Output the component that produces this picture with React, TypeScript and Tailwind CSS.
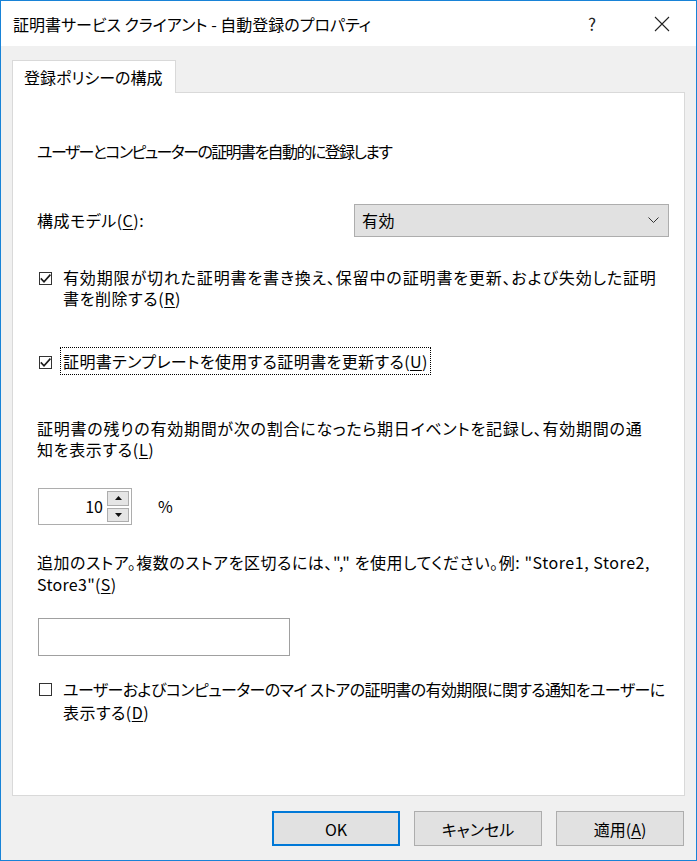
import React from 'react';

const font = "font-['Noto_Sans_CJK_JP','Noto_Sans',sans-serif] [font-feature-settings:'palt']";

const Key: React.FC<{ k: string }> = ({ k }) => (
  <>
    (<span className="underline underline-offset-2">{k}</span>)
  </>
);

const CheckBox: React.FC<{ checked?: boolean }> = ({ checked }) => (
  <div className="w-[13px] h-[13px] border border-[#333] bg-white shrink-0 mt-[5px] ml-[2px] flex items-center justify-center">
    {checked && (
      <svg width="11" height="11" viewBox="0 0 11 11">
        <path d="M0.8 5.4 L4 8.8 L10.4 1.6" fill="none" stroke="#1a1a1a" strokeWidth="1.6" />
      </svg>
    )}
  </div>
);

const Button: React.FC<{ children: React.ReactNode; primary?: boolean }> = ({ children, primary }) => (
  <div
    className={`w-[128px] h-[35px] flex items-center justify-center bg-[#e1e1e1] text-[16px] ${
      primary ? 'border-2 border-[#0078d7]' : 'border border-[#adadad]'
    }`}
  >
    {children}
  </div>
);

export default function App() {
  return (
    <div className={`w-[697px] h-[861px] border border-[#1883d7] bg-[#f0f0f0] flex flex-col text-black ${font}`}>
      {/* title bar */}
      <div className="h-[45px] bg-white flex items-center pl-[12px] pr-[11px] shrink-0">
        <span className="text-[16px]">証明書サービス クライアント - 自動登録のプロパティ</span>
        <div className="ml-auto w-[46px] flex justify-center text-[17px] text-[#222]">?</div>
        <div className="ml-[24px] w-[46px] flex justify-center">
          <svg width="16" height="16" viewBox="0 0 16 16">
            <path d="M1 1 L15 15 M15 1 L1 15" stroke="#222" strokeWidth="1.1" fill="none" />
          </svg>
        </div>
      </div>

      <div className="flex-1 px-[11px] pt-[14px] flex flex-col">
        {/* tab */}
        <div className="w-[164px] h-[33px] bg-white border border-b-0 border-[#d9d9d9] relative z-10 -mb-px pl-[11px] flex items-center text-[16px]">
          登録ポリシーの構成
        </div>

        {/* panel */}
        <div className="h-[704px] bg-white border border-[#d9d9d9] pl-[24px] pr-[10px] pt-[48px] text-[16px] leading-[21px] whitespace-nowrap">
          <div className="tracking-[-1.6px]">ユーザーとコンピューターの証明書を自動的に登録します</div>

          <div className="flex items-center mt-[42px]">
            <div className="w-[317px] tracking-[0.5px]">
              構成モデル<Key k="C" />:
            </div>
            <div className="w-[315px] h-[33px] bg-[#e1e1e1] border border-[#adadad] flex items-center pl-[7px] pr-[9px]">
              <span className="tracking-[0.5px]">有効</span>
              <svg className="ml-auto" width="11" height="7" viewBox="0 0 11 7">
                <path d="M0.5 0.5 L5.5 5.5 L10.5 0.5" fill="none" stroke="#333" strokeWidth="1" />
              </svg>
            </div>
          </div>

          <div className="flex mt-[30px]">
            <CheckBox checked />
            <div className="ml-[11px]">
              <div className="tracking-[0.86px]">有効期限が切れた証明書を書き換え、保留中の証明書を更新、および失効した証明</div>
              <div className="tracking-[0.6px]">
                書を削除する<Key k="R" />
              </div>
            </div>
          </div>

          <div className="flex mt-[42px]">
            <CheckBox checked />
            <div className="ml-[8px]">
              <span className="border border-dotted border-black px-[2px] py-px tracking-[0.4px]">
                証明書テンプレートを使用する証明書を更新する<Key k="U" />
              </span>
            </div>
          </div>

          <div className="mt-[46px]">
            <div className="tracking-[0.75px]">証明書の残りの有効期間が次の割合になったら期日イベントを記録し、有効期間の通</div>
            <div className="tracking-[0.7px]">
              知を表示する<Key k="L" />
            </div>
          </div>

          <div className="flex items-center mt-[28px]">
            <div className="ml-[1px] w-[94px] h-[37px] border border-[#adadad] flex">
              <div className="flex-1 flex items-center justify-end pr-[4px]">10</div>
              <div className="w-[24px] flex flex-col gap-[2px] py-[2px] pr-[2px]">
                <div className="flex-1 bg-[#e5e5e5] border border-[#adadad] flex items-center justify-center">
                  <svg width="7" height="4" viewBox="0 0 7 4">
                    <path d="M3.5 0 L7 4 L0 4 Z" fill="#111" />
                  </svg>
                </div>
                <div className="flex-1 bg-[#e5e5e5] border border-[#adadad] flex items-center justify-center">
                  <svg width="7" height="4" viewBox="0 0 7 4">
                    <path d="M0 0 L7 0 L3.5 4 Z" fill="#111" />
                  </svg>
                </div>
              </div>
            </div>
            <span className="ml-[26px]">%</span>
          </div>

          <div className="mt-[26px] leading-[22px]">
            <div className="tracking-[0.55px]">追加のストア。複数のストアを区切るには、"," を使用してください。例: "Store1, Store2,</div>
            <div className="tracking-[0.3px]">
              Store3"<Key k="S" />
            </div>
          </div>

          <div className="ml-[1px] mt-[23px] w-[252px] h-[38px] border border-[#a0a0a0]" />

          <div className="flex mt-[22px] leading-[23px]">
            <CheckBox />
            <div className="ml-[11px]">
              <div className="tracking-[-0.6px]">ユーザーおよびコンピューターのマイ ストアの証明書の有効期限に関する通知をユーザーに</div>
              <div className="tracking-[0.5px]">
                表示する<Key k="D" />
              </div>
            </div>
          </div>
        </div>

        {/* buttons */}
        <div className="flex justify-end gap-[14px] mt-[15px] pr-[1px]">
          <Button primary>OK</Button>
          <Button>キャンセル</Button>
          <Button>
            適用<Key k="A" />
          </Button>
        </div>
      </div>
    </div>
  );
}
